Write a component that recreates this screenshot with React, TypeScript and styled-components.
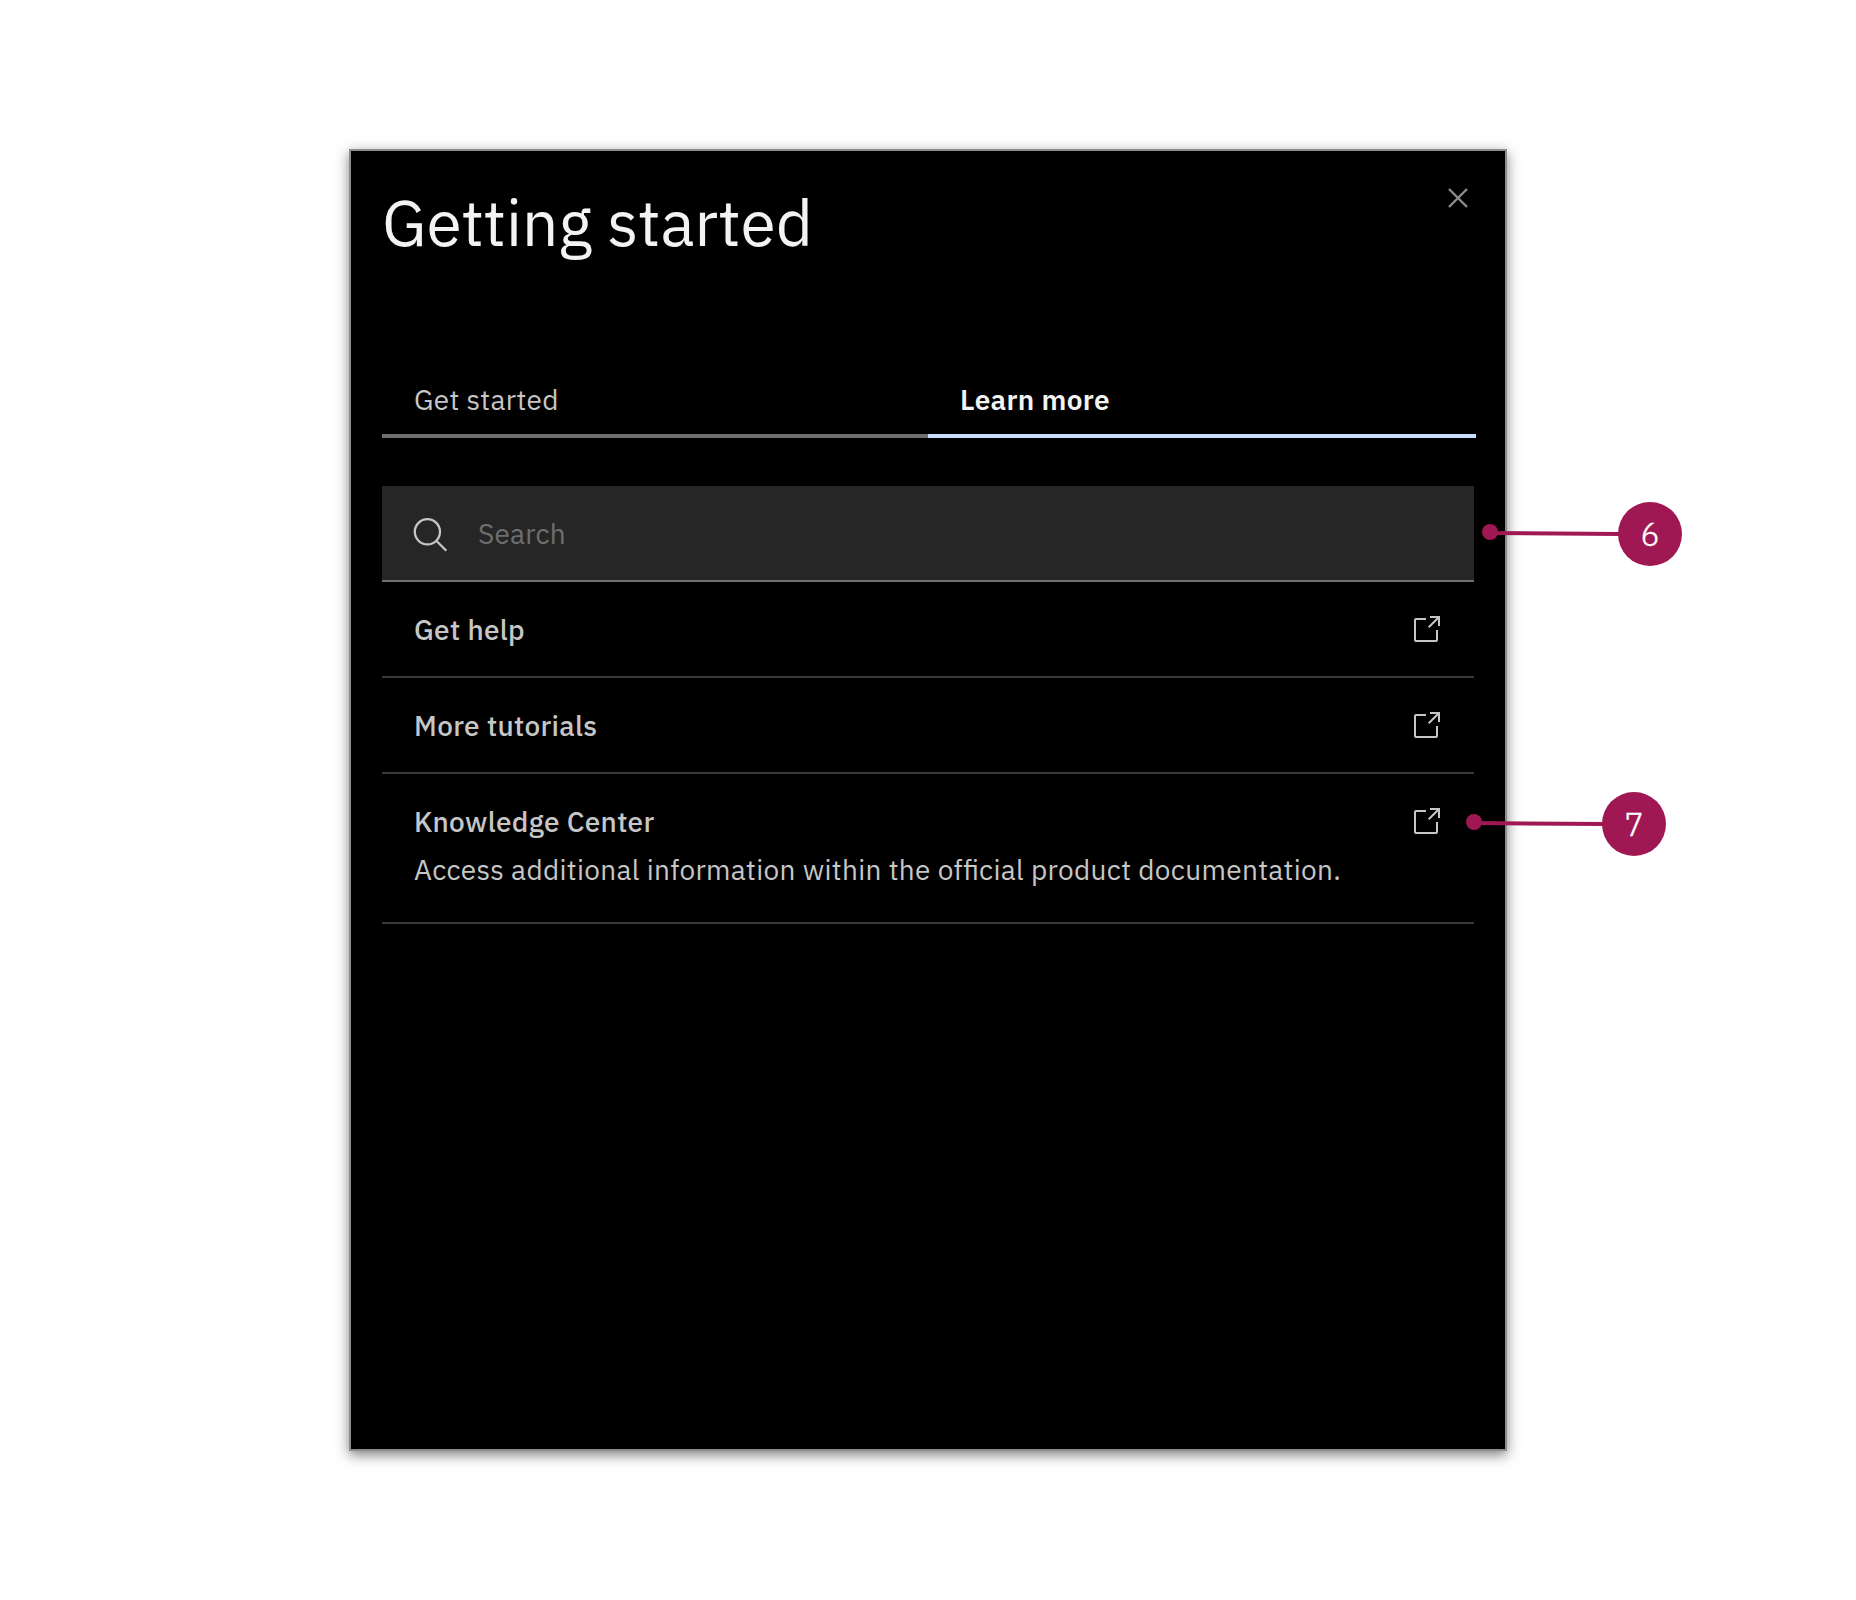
import React from "react";
import styled, { createGlobalStyle } from "styled-components";

const GlobalStyle = createGlobalStyle`
  *, *::before, *::after { box-sizing: border-box; }
  body {
    margin: 0;
    background: #ffffff;
    font-family: "IBM Plex Sans", "Open Sans", sans-serif;
  }
`;

const Page = styled.main`
  display: flex;
  justify-content: center;
  align-items: flex-start;
  height: 1600px;
  padding-top: 149px;
`;

const Panel = styled.section`
  width: 1158px;
  height: 1302px;
  padding: 29px 31px;
  background: #000000;
  border: 2px solid #8c8c8c;
  box-shadow: 0 4px 12px rgba(0, 0, 0, 0.5);
`;

const Header = styled.header`
  display: flex;
  justify-content: space-between;
  align-items: flex-start;
`;

const Title = styled.h1`
  margin: 0;
  font-size: 64px;
  font-weight: 400;
  line-height: 84px;
  color: #f3f3f3;
`;

const CloseButton = styled.button`
  display: flex;
  margin: 8px 6px 0 0;
  padding: 0;
  border: 0;
  background: none;
  color: #8d8d8d;
`;

const Tabs = styled.nav`
  display: flex;
  margin: 102px -2px 0 0;
`;

const Tab = styled.button<{ $active?: boolean }>`
  flex: ${({ $active }) => ($active ? "0 0 548px" : "0 0 546px")};
  padding: 16px 32px;
  border: 0;
  border-bottom: 4px solid ${({ $active }) => ($active ? "#c9deff" : "#6f6f6f")};
  background: none;
  font-family: inherit;
  font-size: 28px;
  font-weight: ${({ $active }) => ($active ? 600 : 400)};
  line-height: 36px;
  letter-spacing: 0.32px;
  text-align: left;
  color: ${({ $active }) => ($active ? "#f3f3f3" : "#c6c6c6")};
`;

const SearchField = styled.div`
  position: relative;
  display: flex;
  align-items: center;
  gap: 30px;
  height: 96px;
  margin-top: 48px;
  padding: 2px 0 0 31px;
  background: #262626;
  border-bottom: 2px solid #6f6f6f;
  color: #c6c6c6;
`;

const Placeholder = styled.span`
  font-size: 28px;
  line-height: 36px;
  letter-spacing: 0.2px;
  color: #6f6f6f;
`;

const List = styled.ul`
  margin: 0;
  padding: 0;
  list-style: none;
`;

const Item = styled.li<{ $tall?: boolean }>`
  position: relative;
  display: flex;
  justify-content: space-between;
  align-items: flex-start;
  padding: 30px 34px ${({ $tall }) => ($tall ? 34 : 28)}px 32px;
  border-bottom: 2px solid #393939;
  color: #c6c6c6;
`;

const ItemText = styled.div`
  display: flex;
  flex-direction: column;
  gap: 12px;
`;

const ItemTitle = styled.span`
  font-size: 28px;
  font-weight: 500;
  line-height: 36px;
  letter-spacing: 0.32px;
`;

const ItemDescription = styled.span`
  font-size: 28px;
  line-height: 36px;
  letter-spacing: 0.32px;
  font-feature-settings: "liga" 1;
  white-space: nowrap;
`;

const LaunchSvg = styled.svg`
  flex: none;
  margin-top: 4px;
`;

const CalloutBox = styled.div<{ $top: number; $shift: number }>`
  position: absolute;
  top: ${({ $top }) => $top}px;
  left: calc(100% + ${({ $shift }) => $shift}px);
  display: flex;
  z-index: 1;
`;

const Badge = styled.span`
  display: flex;
  align-items: center;
  justify-content: center;
  width: 64px;
  height: 64px;
  border-radius: 50%;
  background: #9f1853;
  color: #ffffff;
  font-size: 32px;
  font-weight: 300;
  line-height: 42px;
  -webkit-text-stroke: 0.4px #ffffff;
`;

function Callout({ label, top, shift }: { label: string; top: number; shift: number }) {
  return (
    <CalloutBox $top={top} $shift={shift}>
      <svg width="136" height="64" viewBox="0 0 136 64" overflow="visible">
        <circle cx="8" cy="30" r="8" fill="#9f1853" />
        <path d="M8 31L138 32" stroke="#9f1853" strokeWidth="4" />
      </svg>
      <Badge>{label}</Badge>
    </CalloutBox>
  );
}

function CloseIcon() {
  return (
    <svg width="20" height="20" viewBox="0 0 20 20" fill="none" stroke="currentColor" strokeWidth="2.4">
      <path d="M1 1L19 19M19 1L1 19" />
    </svg>
  );
}

function SearchIcon() {
  return (
    <svg width="35" height="35" viewBox="0 0 35 35" fill="none" stroke="currentColor" strokeWidth="2.3">
      <circle cx="14.4" cy="14.8" r="12.6" />
      <path d="M23.3 23.7L33.3 33.7" />
    </svg>
  );
}

function LaunchIcon() {
  return (
    <LaunchSvg width="26" height="26" viewBox="0 0 26 26" fill="none" stroke="currentColor" strokeWidth="2">
      <path d="M12 3H2Q1 3 1 4V24Q1 25 2 25H22Q23 25 23 24V14" />
      <path d="M16 1H25V10M25 1L14.7 11.3" />
    </LaunchSvg>
  );
}

const links = ["Get help", "More tutorials"];

export default function App() {
  return (
    <>
      <GlobalStyle />
      <Page>
        <Panel>
          <Header>
            <Title>Getting started</Title>
            <CloseButton aria-label="Close">
              <CloseIcon />
            </CloseButton>
          </Header>
          <Tabs>
            <Tab>Get started</Tab>
            <Tab $active>Learn more</Tab>
          </Tabs>
          <SearchField>
            <SearchIcon />
            <Placeholder>Search</Placeholder>
            <Callout label="6" top={16} shift={8} />
          </SearchField>
          <List>
            {links.map((title) => (
              <Item key={title}>
                <ItemTitle>{title}</ItemTitle>
                <LaunchIcon />
              </Item>
            ))}
            <Item $tall>
              <ItemText>
                <ItemTitle>Knowledge Center</ItemTitle>
                <ItemDescription>
                  Access additional information within the official product documentation.
                </ItemDescription>
              </ItemText>
              <LaunchIcon />
              <Callout label="7" top={18} shift={-8} />
            </Item>
          </List>
        </Panel>
      </Page>
    </>
  );
}
